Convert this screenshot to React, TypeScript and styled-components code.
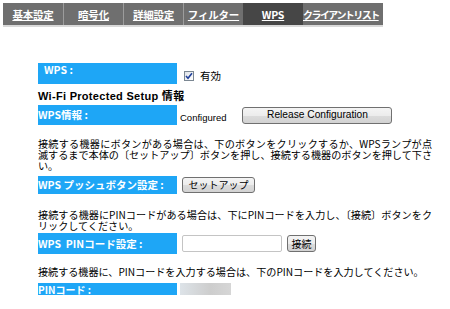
import styled, { createGlobalStyle } from 'styled-components';

const GlobalStyle = createGlobalStyle`
  body {
    margin: 0;
    background: #fff;
    font-family: 'Noto Sans CJK JP', sans-serif;
    color: #000;
  }
`;

const tabs = ['基本設定', '暗号化', '詳細設定', 'フィルター', 'WPS', 'クライアントリスト'];

export default function App() {
  return (
    <>
      <GlobalStyle />
      <Page>
        <Nav>
          {tabs.map((t, i) => (
            <Tab key={t} $active={t === 'WPS'} $last={i === tabs.length - 1} $first={i === 0}>
              <span>{t}</span>
            </Tab>
          ))}
        </Nav>
        <Content>
          <Row $h={21} $mt={36}>
            <Label $valign="start" $indent>WPS :</Label>
            <Value $align="flex-end">
              <CheckBox>
                <svg width="8" height="8" viewBox="0 0 8 8">
                  <path d="M1 4 L3 6.2 L7 1.2" fill="none" stroke="#21409a" strokeWidth="1.6" />
                </svg>
              </CheckBox>
              <ValueText>有効</ValueText>
            </Value>
          </Row>
          <Heading>Wi-Fi Protected Setup 情報</Heading>
          <Row $h={20} $mt={3}>
            <Label $valign="center">WPS情報 :</Label>
            <Value $align="center">
              <Plain>Configured</Plain>
              <Button $w={150} $h={17} $ml={16}>Release Configuration</Button>
            </Value>
          </Row>
          <Para $mt={13}>
            <Line>接続する機器にボタンがある場合は、下のボタンをクリックするか、WPSランプが点</Line>
            <Line>滅するまで本体の〔セットアップ〕ボタンを押し、接続する機器のボタンを押して下さ</Line>
            <Line $last>い。</Line>
          </Para>
          <Row $h={18} $mt={5}>
            <Label $valign="center">WPS プッシュボタン設定 :</Label>
            <Value $align="center">
              <Button $w={73} $h={16} $ml={2} $jp>セットアップ</Button>
            </Value>
          </Row>
          <Para $mt={15}>
            <Line>接続する機器にPINコードがある場合は、下にPINコードを入力し、〔接続〕ボタンをク</Line>
            <Line $last>リックしてください。</Line>
          </Para>
          <Row $h={21} $mt={2}>
            <Label $valign="center">WPS&nbsp; PINコード設定 :</Label>
            <Value $align="center">
              <PinInput />
              <Button $w={29} $h={17} $ml={5} $jp>接続</Button>
            </Value>
          </Row>
          <Para $mt={12}>
            <Line $last>接続する機器に、PINコードを入力する場合は、下のPINコードを入力してください。</Line>
          </Para>
          <Row $h={11} $mt={6}>
            <Label $valign="center" $small>PINコード :</Label>
            <Value $align="flex-start">
              <PinBox />
            </Value>
          </Row>
        </Content>
      </Page>
    </>
  );
}

const Page = styled.div`
  width: 450px;
  height: 309px;
  overflow: hidden;
  padding-top: 3px;
  box-sizing: border-box;
`;

const Nav = styled.nav`
  display: flex;
  margin-left: 3px;
  width: 380px;
  height: 22px;
  background: #6f6f6f;
  border-bottom: 2px solid #d9d9d9;
`;

const Tab = styled.div<{ $active?: boolean; $last?: boolean; $first?: boolean }>`
  flex: ${p => (p.$last ? '0 0 77px' : '0 0 60px')};
  display: flex;
  align-items: center;
  justify-content: ${p => (p.$last ? 'flex-start' : 'center')};
  box-sizing: border-box;
  border-left: ${p => (p.$first || p.$last || p.$active ? 'none' : '1px solid #9c9c9c')};
  background: ${p => (p.$active ? '#464646' : 'transparent')};
  color: #fff;
  font-size: ${p => (p.$last ? '10px' : '10.5px')};
  font-weight: bold;
  white-space: nowrap;
  letter-spacing: ${p => (p.$last ? '-1.55px' : '-0.2px')};

  span {
    text-decoration: underline;
    text-underline-offset: 1px;
  }
`;

const Content = styled.div`
  margin-left: 38px;
  width: 400px;
`;

const Row = styled.div<{ $h: number; $mt: number }>`
  display: grid;
  grid-template-columns: 139px 1fr;
  column-gap: 3px;
  height: ${p => p.$h}px;
  margin-top: ${p => p.$mt}px;
`;

const Label = styled.div<{ $valign: string; $indent?: boolean; $small?: boolean }>`
  background: #1ea6f6;
  color: #fff;
  font-size: ${p => (p.$small ? '10px' : '10.5px')};
  font-weight: bold;
  line-height: ${p => (p.$small ? '11px' : '12px')};
  display: flex;
  align-items: ${p => p.$valign};
  padding-left: ${p => (p.$indent ? '6px' : '0')};
  padding-top: ${p => (p.$valign === 'start' ? '1px' : '0')};
  white-space: nowrap;
`;

const Value = styled.div<{ $align: string }>`
  display: flex;
  align-items: ${p => p.$align};
  padding-bottom: ${p => (p.$align === 'flex-end' ? '3px' : '0')};
  box-sizing: border-box;
`;

const CheckBox = styled.span`
  width: 10px;
  height: 10px;
  margin-left: 4px;
  box-sizing: border-box;
  border: 1px solid #7b8792;
  background: linear-gradient(135deg, #dfe3e8, #fff);
  display: flex;
  align-items: center;
  justify-content: center;
`;

const ValueText = styled.span`
  margin-left: 6px;
  font-size: 10.5px;
  line-height: 11px;
`;

const Heading = styled.div`
  margin-top: 6px;
  font-family: 'Liberation Sans', 'Noto Sans CJK JP', sans-serif;
  font-size: 11px;
  font-weight: bold;
  line-height: 12px;
  letter-spacing: 0.3px;
`;

const Plain = styled.span`
  font-family: 'Liberation Sans', sans-serif;
  font-size: 9.5px;
  padding-top: 5px;
`;

const Button = styled.button<{ $w: number; $h: number; $ml: number; $jp?: boolean }>`
  width: ${p => p.$w}px;
  height: ${p => p.$h}px;
  margin-left: ${p => p.$ml}px;
  padding: 0;
  border: 1px solid #707070;
  border-radius: 3px;
  background: linear-gradient(#f4f4f4 0%, #ececec 50%, #dcdcdc 51%, #d2d2d2 100%);
  font-family: ${p => (p.$jp ? "'Noto Sans CJK JP', sans-serif" : "'Liberation Sans', sans-serif")};
  font-size: ${p => (p.$jp ? '10px' : '10.2px')};
  line-height: 1;
  color: #000;
  white-space: nowrap;
`;

const Para = styled.div<{ $mt: number }>`
  margin-top: ${p => p.$mt}px;
  width: 394px;
  font-size: 10.1px;
  line-height: 11px;
`;

const Line = styled.span<{ $last?: boolean }>`
  display: block;
  white-space: nowrap;
  text-align: ${p => (p.$last ? 'left' : 'justify')};
  text-align-last: ${p => (p.$last ? 'auto' : 'justify')};
`;

const PinInput = styled.input`
  width: 100px;
  height: 17px;
  margin-left: 2px;
  box-sizing: border-box;
  border: 1px solid #c4c4c4;
  border-radius: 2px;
  background: #fff;
  outline: none;
`;

const PinBox = styled.div`
  width: 51px;
  height: 12px;
  background: linear-gradient(to right, #dde3e8, #cdcdcd 60%, #d6d6d6);
`;
